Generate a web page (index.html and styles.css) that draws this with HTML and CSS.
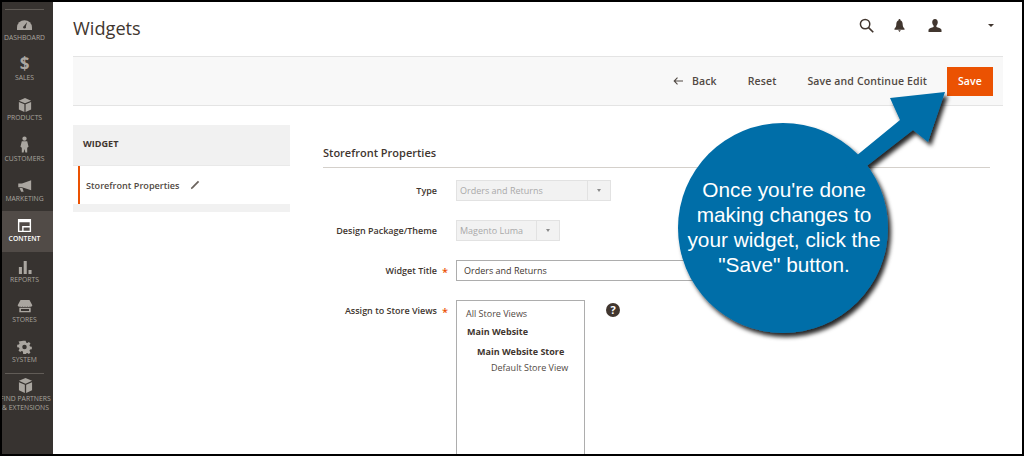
FILE: index.html
```html
<!DOCTYPE html>
<html lang="en">
<head>
<meta charset="utf-8">
<title>Widgets</title>
<link rel="stylesheet" href="styles.css">
</head>
<body>
<div class="frame">
  <nav class="sidebar">
    <div class="rule"></div>
    <a class="nav-item"><svg class="ic-dash" viewBox="0 0 20 13" width="15" height="10"><path d="M0 13v-3a10 10 0 0 1 20 0v3z" fill="#aaa6a0"/><path d="M8.800 8.500 13.500 2.500 11.300 10z" fill="#373330"/><circle cx="10" cy="9.500" r="1.800" fill="#373330"/></svg><span>Dashboard</span></a>
    <a class="nav-item"><span class="dollar">$</span><span>Sales</span></a>
    <a class="nav-item"><svg viewBox="0 0 16 16" width="14" height="14"><path d="M8 0 15 3 8 6 1 3zM1 4.500l6.300 2.700V16L1 13zM15 4.500 8.700 7.200V16l6.300-3z" fill="#aaa6a0"/></svg><span>Products</span></a>
    <a class="nav-item"><svg viewBox="0 0 10 18" width="9" height="17"><circle cx="5" cy="2.500" r="2.400" fill="#aaa6a0"/><path d="M2 5.500h6l1.500 6-1.500 1V18H6l-1-4-1 4H2v-5.500L.5 11.500z" fill="#aaa6a0"/></svg><span>Customers</span></a>
    <a class="nav-item"><svg class="ic-mkt" viewBox="0 0 18 14" width="15" height="12"><path d="M6 4 17 0v12L6 8.500H1.500V4zM3 9.500h3.500L8 14H5z" fill="#aaa6a0"/></svg><span>Marketing</span></a>
    <a class="nav-item active"><svg viewBox="0 0 16 16" width="15" height="15"><path d="M1 1h14v14H1zM2.500 4.500v9h3v-5h8v-4zM7 10v3.500h6.500V10z" fill="#fff" fill-rule="evenodd"/></svg><span>Content</span></a>
    <a class="nav-item"><svg viewBox="0 0 16 16" width="14" height="14"><path d="M1 8h3.500v8H1zM6.500 1H10v15H6.500zM12 11.500h3.500V16H12z" fill="#aaa6a0"/></svg><span>Reports</span></a>
    <a class="nav-item"><svg class="ic-mkt" viewBox="0 0 18 16" width="16" height="13"><path d="M3.500 0h11L18 6.500a2 2 0 0 1-3 1.500 2.200 2.200 0 0 1-3 0 2.200 2.200 0 0 1-3 0 2.200 2.200 0 0 1-3 0 2.200 2.200 0 0 1-3 0A2 2 0 0 1 0 6.500zM2 9.500h14V15H2zM4 11v2.500h10V11z" fill="#aaa6a0" fill-rule="evenodd"/></svg><span>Stores</span></a>
    <a class="nav-item"><svg viewBox="0 0 16 16" width="15" height="14"><path d="M6.500 0h3l.5 2.300 1.600.7 2-1.300 2 2-1.300 2 .7 1.600 2.300.5v3l-2.300.5-.7 1.600 1.300 2-2 2-2-1.300-1.600.7-.5 2.300h-3L6 13.700 4.400 13l-2 1.300-2-2 1.300-2L1 8.700-1.300 8.200v-3L1 4.700l.7-1.600-1.300-2z" transform="translate(.8 .8) scale(.9)" fill="#aaa6a0"/><circle cx="8" cy="8" r="2.600" fill="#373330"/></svg><span>System</span></a>
    <div class="rule"></div>
    <a class="nav-item partners"><svg viewBox="0 0 16 16" width="15" height="15"><path d="M8 0 15 3 8 6 1 3zM1 4.500l6.300 2.700V16L1 13zM15 4.500 8.700 7.200V16l6.300-3z" fill="#aaa6a0"/></svg><span>Find Partners<br>&amp; Extensions</span></a>
  </nav>

  <main class="main">
    <header class="page-head">
      <h1>Widgets</h1>
      <div class="head-icons">
        <svg viewBox="0 0 16 16" width="15" height="15"><circle cx="6.500" cy="6.500" r="5" fill="none" stroke="#41362f" stroke-width="1.600"/><path d="m10.200 10.200 5 5" stroke="#41362f" stroke-width="1.800"/></svg>
        <svg viewBox="0 0 12 14" width="11" height="13"><path d="M6 0a1 1 0 0 1 1 1.200C9 2 9.500 4 9.500 6c0 2 .8 3.500 2 4.500v1H.5v-1c1.200-1 2-2.500 2-4.500 0-2 .5-4 2.500-4.800A1 1 0 0 1 6 0zM4.500 12.300h3L6 14z" fill="#41362f"/></svg>
        <svg class="ic-user" viewBox="0 0 14 14" width="14" height="13"><path d="M7 0c2 0 3 1.500 3 3.500 0 1.500-.8 3-1.500 3.700v1.300c2 .7 5 1.500 5.500 3V14H0v-2.500c.5-1.500 3.500-2.300 5.500-3V7.200C4.800 6.500 4 5 4 3.500 4 1.500 5 0 7 0z" fill="#41362f"/></svg>
        <span class="ic-caret"></span>
      </div>
    </header>

    <div class="action-bar">
      <a class="act back"><svg class="arrow" viewBox="0 0 10 8" width="10" height="8"><path d="M10 4H1.500M4.500 .7 1.200 4l3.300 3.300" fill="none" stroke="#514943" stroke-width="1.100"/></svg>Back</a>
      <a class="act">Reset</a>
      <a class="act act-last">Save and Continue Edit</a>
      <a class="save">Save</a>
    </div>

    <div class="columns">
      <aside class="tabs">
        <div class="tabs-title">WIDGET</div>
        <div class="tab-item">
          <span>Storefront Properties</span>
          <svg viewBox="0 0 12 12" width="10" height="10"><path d="M9.500 1 11 2.500 3.300 10.200 1 11l.8-2.300z" fill="#6b635d"/></svg>
        </div>
        <div class="tabs-foot"></div>
      </aside>

      <section class="form">
        <h2>Storefront Properties</h2>
        <div class="row">
          <label>Type</label>
          <div class="select type-select"><span>Orders and Returns</span><i></i></div>
        </div>
        <div class="row">
          <label>Design Package/Theme</label>
          <div class="select theme-select"><span>Magento Luma</span><i></i></div>
        </div>
        <div class="row">
          <label class="req">Widget Title</label>
          <div class="input">Orders and Returns</div>
        </div>
        <div class="row row-top">
          <label class="req">Assign to Store Views</label>
          <div class="multi">
            <div class="opt">All Store Views</div>
            <div class="grp">Main Website</div>
            <div class="grp sub">Main Website Store</div>
            <div class="opt leaf">Default Store View</div>
          </div>
          <span class="help">?</span>
        </div>
      </section>
    </div>
  </main>

  <div class="callout">
    <svg class="callout-shape" viewBox="0 0 300 240" width="300" height="240">
      <defs><filter id="sh" x="-10%" y="-10%" width="125%" height="125%"><feDropShadow dx="3" dy="4" stdDeviation="2" flood-color="#000" flood-opacity=".85"/></filter></defs>
      <g filter="url(#sh)" fill="#046ea8">
        <circle cx="108" cy="136" r="105"/>
        <path d="M170 73 225 28 215 6 270 0 253 50 238 38 193 73 178 88z"/>
      </g>
    </svg>
    <p>Once you're done<br>making changes to<br>your widget, click the<br>"Save" button.</p>
  </div>
</div>
</body>
</html>
```
FILE: styles.css
```css
* { box-sizing: border-box; }
html, body { margin: 0; padding: 0; }
body { font-family: "Open Sans", "Liberation Sans", sans-serif; color: #41362f; background: #000; }

.frame {
  position: relative;
  display: flex;
  width: 1024px;
  height: 456px;
  border: 2px solid #000;
  background: #fff;
  overflow: hidden;
}

/* Sidebar */
.sidebar {
  flex: none;
  width: 51px;
  background: #373330;
  display: flex;
  flex-direction: column;
  align-items: stretch;
  padding-top: 7px;
  overflow: hidden;
}
.rule { height: 1px; background: #615c57; margin: 0 9px 0 3px; flex: none; }
.nav-item {
  height: 40.3px;
  flex: none;
  display: flex;
  flex-direction: column;
  align-items: center;
  justify-content: flex-end;
  padding: 0 6px 8.5px 0;
  gap: 1px;
  font-size: 6.800px;
  line-height: 9px;
  text-transform: uppercase;
  text-align: center;
  color: #a8a49e;
  white-space: nowrap;
}
.nav-item svg { flex: none; }
.ic-dash { margin-bottom: 2px; }
.ic-mkt { margin-bottom: 1px; }
.nav-item.active { background: #514b47; color: #fff; font-weight: 600; }
.nav-item.partners { height: auto; justify-content: flex-start; padding: 4px 4px 0 0; gap: 1.500px; }
.dollar { font-size: 17px; line-height: 17px; font-weight: 700; color: #aaa6a0; }

/* Main */
.main { flex: 1; min-width: 0; padding: 0 19px 0 20px; }
.page-head { height: 54px; display: flex; align-items: center; justify-content: space-between; }
h1 { margin: 0; font-size: 18.200px; font-weight: 400; color: #41362f; position: relative; top: -1px; }
.head-icons { display: flex; align-items: center; gap: 20px; padding-right: 9px; position: relative; top: -4px; }
.ic-user { margin-left: 3px; }
.ic-caret { margin-left: 26px; width: 0; height: 0; border: 3px solid transparent; border-top: 3px solid #41362f; border-bottom: 0; }

.action-bar {
  height: 50px;
  background: #f8f8f8;
  border-top: 1px solid #e4e4e4;
  border-bottom: 1px solid #e4e4e4;
  display: flex;
  align-items: center;
  justify-content: flex-end;
  padding-right: 10px;
  font-size: 10.500px;
  font-weight: 600;
  letter-spacing: .13px;
  color: #514943;
}
.act { margin-right: 31px; }
.act.back { display: flex; align-items: center; }
.act.act-last { margin-right: 20px; }
.arrow { margin-right: 9px; flex: none; }
.save {
  width: 46px;
  height: 29px;
  background: #eb5202;
  color: #fff;
  display: flex;
  align-items: center;
  justify-content: center;
}

.columns { display: flex; margin-top: 19px; }
.tabs { flex: none; width: 217px; font-size: 9.100px; }
.tabs-title {
  height: 41px;
  background: #f1f1f1;
  border-bottom: 1px solid #e9e9e9;
  display: flex;
  align-items: center;
  padding: 0 0 3px 10px;
  font-weight: 700;
  color: #41362f;
}
.tab-item {
  height: 38px;
  background: #fff;
  margin-left: 5px;
  border-left: 2px solid #eb5202;
  display: flex;
  align-items: center;
  gap: 10px;
  padding-left: 6px;
  font-weight: 600;
  color: #514943;
}
.tabs-foot { height: 8px; background: #f1f1f1; }

.form { flex: none; width: 667px; margin-left: 33px; }
h2 {
  margin: 0 0 12px;
  padding-top: 20px;
  height: 43px;
  border-bottom: 1px solid #d4d0cb;
  font-size: 11px;
  font-weight: 600;
  line-height: 15px;
  color: #41362f;
}
.row { display: flex; align-items: center; height: 21px; margin-bottom: 19px; font-size: 9px; }
.row-top { align-items: flex-start; height: auto; margin: 0; }
.row label {
  flex: none;
  width: 114px;
  margin-right: 19px;
  text-align: right;
  font-weight: 600;
  color: #41362f;
  position: relative;
  white-space: nowrap;
}
.row-top label { padding-top: 4px; }
.req::after { content: "*"; position: absolute; right: -11px; color: #eb5202; font-size: 11px; }
.select {
  height: 21px;
  display: flex;
  align-items: center;
  background: #f2f2f2;
  border: 1px solid #e2e2e2;
  color: #a9a9a9;
  padding-left: 3px;
}
.select span { flex: 1; }
.select i {
  flex: none;
  width: 23px;
  height: 100%;
  border-left: 1px solid #e2e2e2;
  position: relative;
}
.select i::after {
  content: "";
  position: absolute;
  left: 9px;
  top: 8px;
  border: 2.500px solid transparent;
  border-top: 3px solid #8a8a8a;
  border-bottom: 0;
}
.type-select { width: 155px; }
.theme-select { width: 104px; }
.input {
  width: 260px;
  height: 21px;
  border: 1px solid #adadad;
  padding-left: 7px;
  display: flex;
  align-items: center;
  color: #41362f;
}
.multi {
  flex: none;
  width: 129px;
  height: 170px;
  border: 1px solid #adadad;
  padding-top: 7px;
  color: #514943;
  line-height: 12px;
}
.opt { padding-left: 9px; height: 18px; }
.grp { padding-left: 10px; font-weight: 700; color: #41362f; height: 20px; }
.grp.sub { padding-left: 20px; height: 16px; }
.opt.leaf { padding-left: 34px; }
.help {
  flex: none;
  width: 14px;
  height: 14px;
  margin: 3px 0 0 21px;
  border-radius: 50%;
  background: #41362f;
  color: #fff;
  font-size: 11px;
  font-weight: 700;
  line-height: 14px;
  text-align: center;
}

/* Callout sits over the page */
.callout { position: absolute; left: 673px; top: 90px; width: 300px; height: 240px; }
.callout-shape { display: block; overflow: visible; }
.callout p {
  position: absolute;
  left: 5px;
  top: 85px;
  width: 208px;
  margin: 0;
  text-align: center;
  font-family: "Liberation Sans", Arial, sans-serif;
  font-size: 20.800px;
  line-height: 25px;
  color: #fff;
}
```
